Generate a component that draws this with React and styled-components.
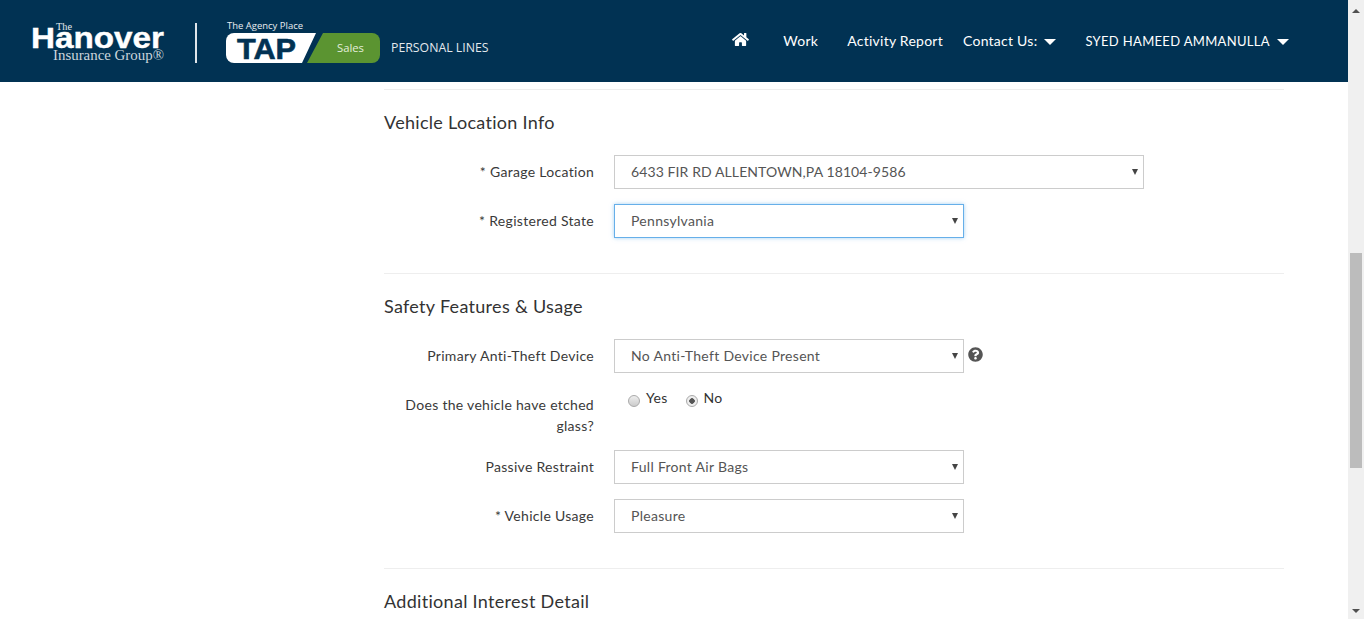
import React from "react";
import styled, { createGlobalStyle } from "styled-components";
import { FaHome, FaQuestionCircle } from "react-icons/fa";

const GlobalStyle = createGlobalStyle`
  html, body {
    margin: 0;
    padding: 0;
    height: 100%;
    overflow: hidden;
    background: #fff;
  }
  * {
    box-sizing: border-box;
  }
`;

const FONT = `Lato, "Open Sans", sans-serif`;

const HanoverLogo = () => (
  <svg width="136" height="44" viewBox="0 0 136 44">
    <text x="25" y="11" fontFamily="Liberation Serif, serif" fontSize="9.5" textLength="16" lengthAdjust="spacingAndGlyphs" fill="#e6ebef">The</text>
    <text x="0" y="29" fontFamily="Liberation Sans, sans-serif" fontWeight="700" fontSize="29" textLength="133" lengthAdjust="spacingAndGlyphs" fill="#fff" stroke="#fff" strokeWidth="0.4">Hanover</text>
    <text x="22" y="41" fontFamily="Liberation Serif, serif" fontSize="14.5" textLength="111" lengthAdjust="spacingAndGlyphs" fill="#ccd6dd">Insurance Group®</text>
  </svg>
);

const TapLogo = () => (
  <svg width="156" height="44" viewBox="0 0 156 44">
    <text x="1" y="10" fontFamily="Open Sans, sans-serif" fontSize="9" textLength="76" lengthAdjust="spacingAndGlyphs" fill="#e8edf1">The Agency Place</text>
    <path d="M8 14H90L76 44H8a8 8 0 0 1-8-8V22a8 8 0 0 1 8-8Z" fill="#fff" />
    <path d="M97 14H146a8 8 0 0 1 8 8V36a8 8 0 0 1-8 8H81Z" fill="#5b9431" />
    <text x="11" y="40" fontFamily="Liberation Sans, sans-serif" fontWeight="700" fontSize="29" textLength="59" lengthAdjust="spacingAndGlyphs" fill="#013253" stroke="#013253" strokeWidth="0.6">TAP</text>
    <text x="111" y="33" fontFamily="Open Sans, sans-serif" fontSize="11.5" textLength="27" lengthAdjust="spacingAndGlyphs" fill="#e4eedb">Sales</text>
  </svg>
);

const Page = styled.div`
  display: flex;
  width: 1364px;
  height: 619px;
  overflow: hidden;
  font-family: ${FONT};
`;

const Main = styled.div`
  flex: 1;
  min-width: 0;
  display: flex;
  flex-direction: column;
`;

const Header = styled.header`
  flex: none;
  height: 82px;
  background: #013253;
  display: flex;
  align-items: center;
  padding: 0 59px 0 31px;
  color: #fff;
`;

const Brand = styled.div`
  display: flex;
  align-items: center;
  flex: 1;
`;

const BrandRule = styled.div`
  width: 2px;
  height: 40px;
  margin: 4px 29px 0 28px;
  background: #dfe5ea;
`;

const LineName = styled.span`
  margin: 13px 0 0 9px;
  font-family: "Open Sans", sans-serif;
  font-size: 12.3px;
  color: #e4e9ed;
  white-space: nowrap;
`;

const Nav = styled.nav`
  display: flex;
  align-items: center;
  margin-top: -1px;
  font-size: 14px;
  letter-spacing: 0.25px;
`;

const NavItem = styled.a`
  display: flex;
  align-items: center;
  margin-left: ${(p) => p.$gap}px;
  color: #fff;
  white-space: nowrap;
`;

const UserName = styled.span`
  font-size: 13px;
  letter-spacing: 0.33px;
`;

const HomeIcon = styled(FaHome)`
  width: 17px;
  height: 15px;
  margin-top: -2px;
`;

const Caret = styled.span`
  width: 0;
  height: 0;
  margin-left: 7px;
  margin-top: 3px;
  border-left: 6.5px solid transparent;
  border-right: 6.5px solid transparent;
  border-top: 6px solid #fff;
`;

const Content = styled.main`
  flex: 1;
  min-height: 0;
  overflow: hidden;
  padding: 7px 64px 0 384px;
`;

const Section = styled.section`
  border-top: 1px solid #eee;
  padding-top: 20px;
  height: ${(p) => p.$height}px;
`;

const Heading = styled.h2`
  margin: 0 0 21px;
  font-size: 18px;
  line-height: 24px;
  font-weight: 400;
  letter-spacing: 0.3px;
  color: #333;
`;

const Rows = styled.div`
  display: flex;
  flex-direction: column;
  gap: 15px;
`;

const Row = styled.div`
  display: grid;
  grid-template-columns: 210px 1fr;
  column-gap: 20px;
`;

const Label = styled.label`
  height: ${(p) => (p.$tall ? 47 : 34)}px;
  padding-top: 6px;
  text-align: right;
  font-size: 14px;
  line-height: 21px;
  letter-spacing: 0.3px;
  color: #3a3a3a;
`;

const Control = styled.div`
  display: flex;
  align-items: flex-start;
  gap: 4px;
`;

const SelectBox = styled.div`
  position: relative;
  width: ${(p) => p.$width}px;
  height: 34px;

  &::after {
    content: "";
    position: absolute;
    top: 14px;
    right: 6px;
    border-left: 3px solid transparent;
    border-right: 3px solid transparent;
    border-top: 6px solid #444;
    pointer-events: none;
  }
`;

const Select = styled.select`
  appearance: none;
  display: block;
  width: 100%;
  height: 100%;
  padding: 0 20px 2px 16px;
  background: #fff;
  border: 1px solid ${(p) => (p.$focused ? "#66afe9" : "#ccc")};
  border-radius: 0;
  outline: none;
  box-shadow: ${(p) => (p.$focused ? "0 0 4px rgba(102, 175, 233, 0.6)" : "none")};
  font-family: ${FONT};
  font-size: 14px;
  letter-spacing: ${(p) => (p.$tight ? 0.1 : 0.3)}px;
  color: #555;
`;

const Help = styled(FaQuestionCircle)`
  width: 15px;
  height: 15px;
  margin-top: 8px;
  color: #555;
`;

const RadioGroup = styled.div`
  display: flex;
  gap: 18px;
  padding: 1px 0 0 14px;
`;

const RadioLabel = styled.label`
  display: flex;
  align-items: flex-start;
  gap: 6px;
  height: 18px;
  font-size: 14px;
  line-height: 18px;
  letter-spacing: 0.3px;
  color: #333;
`;

const Radio = styled.input.attrs({ type: "radio" })`
  appearance: none;
  width: 12px;
  height: 12px;
  margin: 6px 0 0;
  border: 1px solid #aaa;
  border-radius: 50%;
  background: linear-gradient(#eee, #ccc);

  &:checked {
    background: radial-gradient(circle, #555 0 2.5px, #eee 3px);
  }
`;

const Scrollbar = styled.aside`
  flex: none;
  width: 16px;
  height: 100%;
  display: flex;
  flex-direction: column;
  align-items: center;
  justify-content: space-between;
  padding: 9px 0 6px;
  position: relative;
  background: #f0f0f0;
`;

const Arrow = styled.span`
  width: 0;
  height: 0;
  border-left: 4px solid transparent;
  border-right: 4px solid transparent;
  ${(p) => (p.$up ? "border-bottom: 4px solid #505050;" : "border-top: 4px solid #505050;")}
`;

const Thumb = styled.div`
  position: absolute;
  top: 253px;
  left: 2px;
  width: 12px;
  height: 215px;
  background: #bcbcbc;
`;

const Dropdown = ({ width, value, focused, tight }) => (
  <SelectBox $width={width}>
    <Select $focused={focused} $tight={tight} defaultValue={value}>
      <option>{value}</option>
    </Select>
  </SelectBox>
);

export default function App() {
  return (
    <Page>
      <GlobalStyle />
      <Main>
        <Header>
          <Brand>
            <HanoverLogo />
            <BrandRule />
            <TapLogo />
            <LineName>PERSONAL LINES</LineName>
          </Brand>
          <Nav>
            <NavItem $gap={0}><HomeIcon /></NavItem>
            <NavItem $gap={34}>Work</NavItem>
            <NavItem $gap={29}>Activity Report</NavItem>
            <NavItem $gap={20}>Contact Us:<Caret /></NavItem>
            <NavItem $gap={29}><UserName>SYED HAMEED AMMANULLA</UserName><Caret /></NavItem>
          </Nav>
        </Header>
        <Content>
          <Section $height={184}>
            <Heading>Vehicle Location Info</Heading>
            <Rows>
              <Row>
                <Label>* Garage Location</Label>
                <Control>
                  <Dropdown width={530} value="6433 FIR RD ALLENTOWN,PA 18104-9586" tight />
                </Control>
              </Row>
              <Row>
                <Label>* Registered State</Label>
                <Control>
                  <Dropdown width={350} value="Pennsylvania" focused />
                </Control>
              </Row>
            </Rows>
          </Section>
          <Section $height={295}>
            <Heading>Safety Features &amp; Usage</Heading>
            <Rows>
              <Row>
                <Label>Primary Anti-Theft Device</Label>
                <Control>
                  <Dropdown width={350} value="No Anti-Theft Device Present" />
                  <Help />
                </Control>
              </Row>
              <Row>
                <Label $tall>Does the vehicle have etched glass?</Label>
                <RadioGroup>
                  <RadioLabel><Radio name="etched" />Yes</RadioLabel>
                  <RadioLabel><Radio name="etched" defaultChecked />No</RadioLabel>
                </RadioGroup>
              </Row>
              <Row>
                <Label>Passive Restraint</Label>
                <Control>
                  <Dropdown width={350} value="Full Front Air Bags" />
                </Control>
              </Row>
              <Row>
                <Label>* Vehicle Usage</Label>
                <Control>
                  <Dropdown width={350} value="Pleasure" />
                </Control>
              </Row>
            </Rows>
          </Section>
          <Section>
            <Heading>Additional Interest Detail</Heading>
          </Section>
        </Content>
      </Main>
      <Scrollbar>
        <Arrow $up />
        <Thumb />
        <Arrow />
      </Scrollbar>
    </Page>
  );
}
